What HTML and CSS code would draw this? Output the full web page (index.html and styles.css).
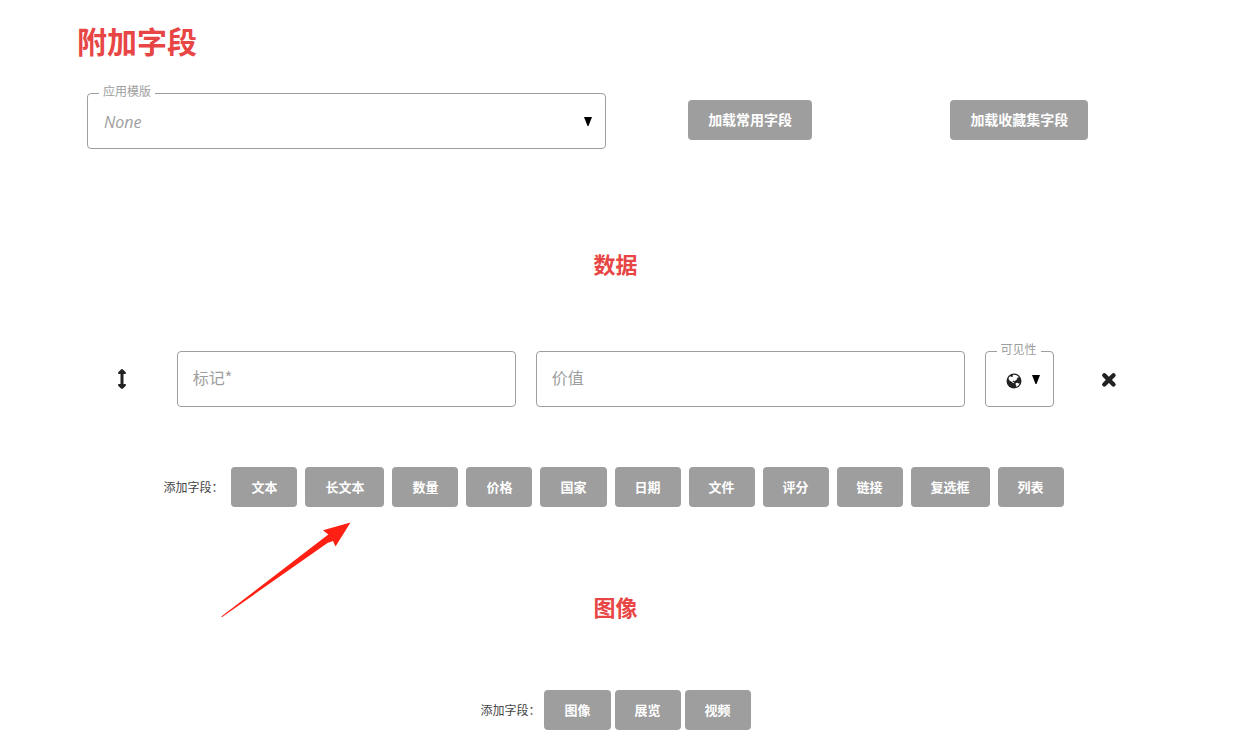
FILE: index.html
```html
<!DOCTYPE html>
<html lang="zh-CN">
<head>
<meta charset="utf-8">
<meta name="viewport" content="width=device-width, initial-scale=1">
<title>附加字段</title>
<link rel="stylesheet" href="styles.css">
</head>
<body>
<main class="page">
  <h1 class="title">附加字段</h1>

  <div class="template-row">
    <div class="field template-field">
      <select class="control template-select" id="template"><option>None</option></select>
      <label class="notch" for="template">应用模版</label>
      <svg class="caret" viewBox="0 0 8 9" aria-hidden="true"><path d="M0 0h8L4.500 9h-1z"/></svg>
    </div>
    <button class="btn btn-large" type="button">加载常用字段</button>
    <button class="btn btn-large" type="button">加载收藏集字段</button>
  </div>

  <section class="section">
    <h2 class="subtitle">数据</h2>
    <div class="data-row">
      <button class="icon-btn" type="button" aria-label="移动">
        <svg width="10" height="22" viewBox="0 0 10 22" aria-hidden="true"><path d="M5 1c.4 0 .7.200 1 .5l2.700 2.800c.6.700.3 1.700-.7 1.700H6.500v10H8c1 0 1.300 1 .7 1.700L6 20.500c-.6.600-1.400.6-2 0l-2.700-2.800C.7 17 1 16 2 16h1.500V6H2C1 6 .7 5 1.300 4.300L4 1.500c.3-.3.600-.5 1-.5z"/></svg>
      </button>
      <div class="field">
        <input class="control" id="mark" type="text">
        <label class="inner-label" for="mark">标记*</label>
      </div>
      <div class="field">
        <input class="control" id="value" type="text">
        <label class="inner-label" for="value">价值</label>
      </div>
      <div class="field">
        <select class="control" id="visibility"><option></option></select>
        <label class="notch" for="visibility">可见性</label>
        <svg class="globe" viewBox="0 0 16 16" aria-hidden="true"><circle cx="8" cy="8" r="7.500"/><path class="land" d="M7.500 1.700l2.300.2 2 1 1.200 1.300-1.300.3-.8 1 .5.700-1.300.5-1 1.300-1 .3-.5-.8-1 .8.300.8 1 .2.400 1-1.200-.2-1.500-1.300-2.100-1.300L2.500 5.800l.7-1.900 1.300-.7 1.300.9 1.200-.5-.4-1z"/><path class="land" d="M9.700 10.200l1.500-.5 1.500.8.900.1-.9 1.700-1.400 1.100-1.100.3.100-1.300-.8-1.100z"/></svg>
        <svg class="caret" viewBox="0 0 8 9" aria-hidden="true"><path d="M0 0h8L4.500 9h-1z"/></svg>
      </div>
      <button class="icon-btn" type="button" aria-label="删除">
        <svg width="16" height="18" viewBox="0 0 16 18" aria-hidden="true"><path d="M3.300 5.300l9.200 9.200M12.500 5.300l-9.200 9.200" fill="none" stroke="currentColor" stroke-width="4.400" stroke-linecap="round"/></svg>
      </button>
    </div>
    <div class="add-row add-row-wide">
      <span class="add-label">添加字段：</span>
      <button class="btn" type="button">文本</button>
      <div class="pointed">
        <button class="btn" type="button">长文本</button>
        <svg class="arrow" width="130" height="96" viewBox="0 0 130 96" aria-hidden="true"><path d="M0 94.800L107.300 12.600 102 8.200 129.500.5 114.500 24.500 112 18.900 106.500 20.900 1.200 95z"/></svg>
      </div>
      <button class="btn" type="button">数量</button>
      <button class="btn" type="button">价格</button>
      <button class="btn" type="button">国家</button>
      <button class="btn" type="button">日期</button>
      <button class="btn" type="button">文件</button>
      <button class="btn" type="button">评分</button>
      <button class="btn" type="button">链接</button>
      <button class="btn" type="button">复选框</button>
      <button class="btn" type="button">列表</button>
    </div>
  </section>

  <section class="section">
    <h2 class="subtitle">图像</h2>
    <div class="add-row add-row-tight">
      <span class="add-label">添加字段：</span>
      <button class="btn" type="button">图像</button>
      <button class="btn" type="button">展览</button>
      <button class="btn" type="button">视频</button>
    </div>
  </section>
</main>
</body>
</html>
```

FILE: styles.css
```css
* {
  box-sizing: border-box;
}

body {
  margin: 0;
  background: #fff;
  color: #222;
  font-family: "Noto Sans CJK SC", "Open Sans", sans-serif;
}

.page {
  padding: 20px 98px 13px 77px;
}

.title,
.subtitle {
  margin: 0;
  color: #e84545;
  font-weight: 700;
}

.title {
  font-size: 30px;
  line-height: 40px;
}

.subtitle {
  font-size: 22px;
  line-height: 30px;
  text-align: center;
}

.template-row {
  display: grid;
  grid-template-columns: 2fr 1fr 1fr;
  align-items: start;
  justify-items: center;
  margin-top: 33px;
  margin-bottom: 99px;
}

.field {
  position: relative;
  margin: 0 10px;
}

.template-field {
  justify-self: stretch;
}

.control {
  display: block;
  width: 100%;
  height: 56px;
  padding: 0 16px;
  border: 1px solid #9e9e9e;
  border-radius: 4px;
  background: #fff;
  color: #222;
  font-family: inherit;
  font-size: 16px;
  appearance: none;
}

.template-select {
  padding-top: 2px;
  color: #9e9e9e;
  font-family: "Open Sans", sans-serif;
  font-style: italic;
}

.notch {
  position: absolute;
  top: -10px;
  left: 12px;
  padding: 0 4px;
  background: #fff;
  color: #9e9e9e;
  font-size: 12px;
  line-height: 16px;
  white-space: nowrap;
}

.inner-label {
  position: absolute;
  top: 14px;
  left: 16px;
  color: #9e9e9e;
  font-size: 16px;
  line-height: 24px;
  pointer-events: none;
}

.caret {
  position: absolute;
  top: 24px;
  right: 14px;
  width: 8px;
  height: 9px;
  pointer-events: none;
}

.globe {
  position: absolute;
  top: 22px;
  left: 21px;
  width: 16px;
  height: 16px;
  fill: #222;
  pointer-events: none;
}

.land {
  fill: #fff;
}

.btn {
  height: 40px;
  padding: 0 20px;
  border: 0;
  border-radius: 4px;
  background: #9e9e9e;
  color: #fff;
  font-family: inherit;
  font-size: 13px;
  font-weight: 700;
  line-height: 20px;
  white-space: nowrap;
}

.btn-large {
  margin-top: 7px;
  padding-bottom: 2px;
  font-size: 14px;
}

.section + .section {
  margin-top: 84px;
}

.data-row {
  display: grid;
  grid-template-columns: 1fr 4fr 5fr 1fr 1fr;
  align-items: center;
  margin-top: 73px;
  margin-bottom: 60px;
}

.icon-btn {
  display: flex;
  justify-content: center;
  padding: 0;
  border: 0;
  background: none;
  color: #222;
  fill: currentColor;
}

.add-row {
  display: flex;
  flex-wrap: wrap;
  align-items: center;
  justify-content: center;
  gap: 8px;
}

.add-row-wide {
  padding-right: 4px;
}

.add-row-tight {
  gap: 4px;
  margin-top: 69px;
}

.add-label {
  color: #444;
  font-size: 12px;
  line-height: 20px;
}

.pointed {
  position: relative;
}

.arrow {
  position: absolute;
  top: 55px;
  right: 33px;
  fill: #ff2014;
  pointer-events: none;
}
```
